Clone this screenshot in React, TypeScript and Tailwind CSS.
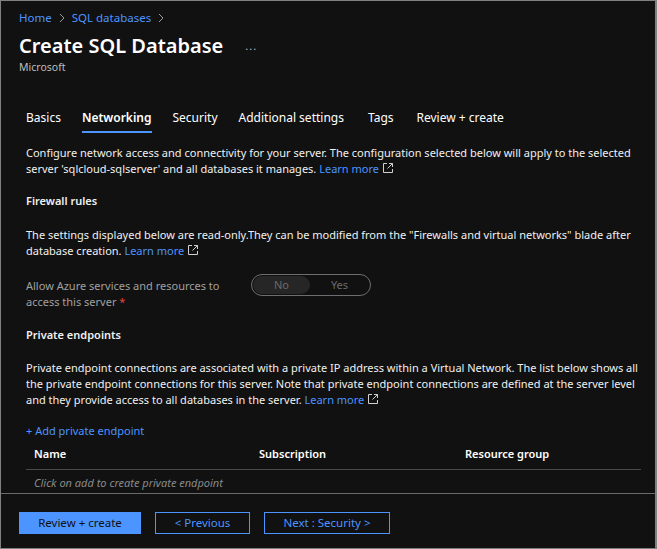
import React from "react";

const ExtIcon = () => (
  <svg width="10" height="10" viewBox="0 0 10 10" className="inline-block ml-[4px] align-[0px]" fill="none" stroke="#d0d0d0" strokeWidth="1">
    <path d="M4 0.5H0.5V9.5H9.5V6" />
    <path d="M6 0.5H9.5V4" />
    <path d="M9.5 0.5L4.5 5.5" />
  </svg>
);

const Learn = () => (
  <>
    <span className="text-[#4c94ff]">Learn more</span>
    <ExtIcon />
  </>
);

export default function App() {
  return (
    <div
      className="w-[657px] h-[549px] bg-[#111111] border border-[#808080] border-r-2 flex flex-col overflow-hidden text-[#f0f0f0]"
      style={{ fontFamily: '"Noto Sans", sans-serif' }}
    >
      <div className="pl-[18px] pt-[9px]">
        <div className="flex items-center text-[11.5px] leading-[16px] text-[#4c94ff]">
          <span>Home</span>
          <svg width="12" height="12" viewBox="0 0 12 12" className="mx-[4px]" fill="none" stroke="#9a9a9a" strokeWidth="1">
            <path d="M4 2L8 6L4 10" />
          </svg>
          <span>SQL databases</span>
          <svg width="12" height="12" viewBox="0 0 12 12" className="mx-[4px]" fill="none" stroke="#9a9a9a" strokeWidth="1">
            <path d="M4 2L8 6L4 10" />
          </svg>
        </div>
        <div className="flex items-center mt-[7px] h-[26px]">
          <span className="text-[20px] leading-[26px] font-semibold text-white">Create SQL Database</span>
          <span className="ml-[22px] text-[11px] text-[#bbbbbb] leading-[10px] tracking-[1px]">...</span>
        </div>
        <div className="text-[10.5px] leading-[14px] text-[#bdbdbd] mt-[1px]">Microsoft</div>
      </div>

      <div className="flex pl-[25px] mt-[34px] text-[12px] leading-[20px] text-white gap-[21px]">
        <div className="pb-[3px] border-b-2 border-transparent">Basics</div>
        <div className="pb-[3px] border-b-2 border-[#4c94ff] font-semibold">Networking</div>
        <div className="pb-[3px] border-b-2 border-transparent">Security</div>
        <div className="pb-[3px] border-b-2 border-transparent">Additional settings</div>
        <div className="pb-[3px] border-b-2 border-transparent ml-[3px]">Tags</div>
        <div className="pb-[3px] border-b-2 border-transparent ml-[2px]">Review + create</div>
      </div>

      <div className="pl-[25px] pr-[14px] text-[11px] leading-[16px] flex-1">
        <p className="mt-[12px] whitespace-nowrap">
          Configure network access and connectivity for your server. The configuration selected below will apply to the selected
          <br />
          server 'sqlcloud-sqlserver' and all databases it manages. <Learn />
        </p>
        <div className="mt-[16px] font-semibold">Firewall rules</div>
        <p className="mt-[18px] whitespace-nowrap">
          The settings displayed below are read-only.They can be modified from the "Firewalls and virtual networks" blade after
          <br />
          database creation. <Learn />
        </p>
        <div className="mt-[19px] flex">
          <div className="w-[225px] text-[#a0a0a0] whitespace-nowrap">
            Allow Azure services and resources to
            <br />
            access this server <span className="text-[#e0443e]">*</span>
          </div>
          <div className="mt-[-4px] w-[120px] h-[22px] rounded-full border border-[#6e6e6e] flex items-center p-[1px] text-[11px] text-[#6a6a6a]">
            <div className="w-[57px] h-[18px] rounded-full bg-[#262626] flex items-center justify-center">No</div>
            <div className="flex-1 flex items-center justify-center">Yes</div>
          </div>
        </div>
        <div className="mt-[17px] font-semibold">Private endpoints</div>
        <p className="mt-[17px] whitespace-nowrap">
          Private endpoint connections are associated with a private IP address within a Virtual Network. The list below shows all
          <br />
          the private endpoint connections for this server. Note that private endpoint connections are defined at the server level
          <br />
          and they provide access to all databases in the server. <Learn />
        </p>
        <div className="mt-[15px] text-[#4c94ff]">+ Add private endpoint</div>
        <div className="mt-[7px] flex font-semibold text-white pb-[7px] border-b border-[#4a4a4a] pl-[8px]">
          <div className="w-[225px]">Name</div>
          <div className="w-[206px]">Subscription</div>
          <div>Resource group</div>
        </div>
        <div className="mt-[5px] pl-[8px] italic text-[#8a8a8a]">Click on add to create private endpoint</div>
      </div>

      <div className="border-t border-[#6a6a6a] pl-[18px] pt-[18px] pb-[14px] flex gap-[14px] text-[11.5px]">
        <div className="w-[122px] h-[22px] bg-[#4c94ff] text-[#111111] flex items-center justify-center">Review + create</div>
        <div className="w-[95px] h-[22px] border border-[#4c94ff] text-[#4c94ff] flex items-center justify-center">&lt; Previous</div>
        <div className="w-[126px] h-[22px] border border-[#4c94ff] text-[#4c94ff] flex items-center justify-center">Next : Security &gt;</div>
      </div>
    </div>
  );
}
